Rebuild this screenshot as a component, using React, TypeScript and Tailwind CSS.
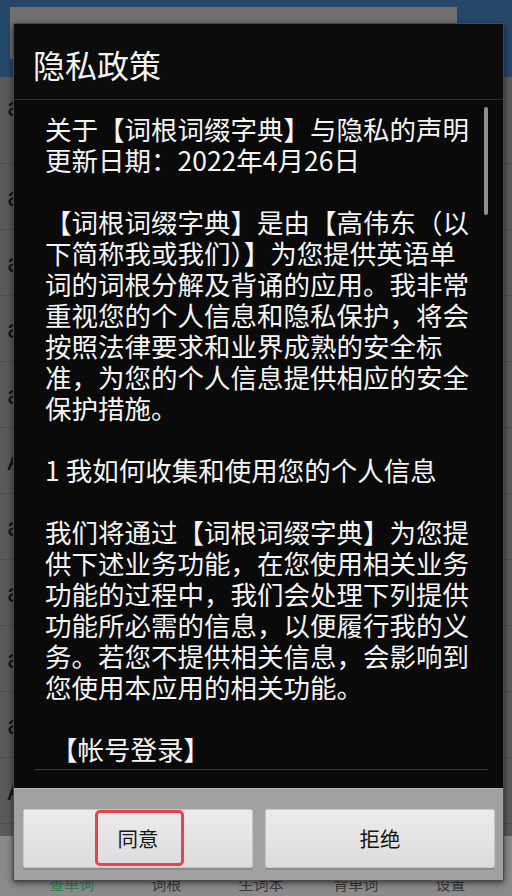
import React from "react";

const lines: string[] = [
  "关于【词根词缀字典】与隐私的声明",
  "更新日期：2022年4月26日",
  "",
  "【词根词缀字典】是由【高伟东（以",
  "下简称我或我们）】为您提供英语单",
  "词的词根分解及背诵的应用。我非常",
  "重视您的个人信息和隐私保护，将会",
  "按照法律要求和业界成熟的安全标",
  "准，为您的个人信息提供相应的安全",
  "保护措施。",
  "",
  "1 我如何收集和使用您的个人信息",
  "",
  "我们将通过【词根词缀字典】为您提",
  "供下述业务功能，在您使用相关业务",
  "功能的过程中，我们会处理下列提供",
  "功能所必需的信息，以便履行我的义",
  "务。若您不提供相关信息，会影响到",
  "您使用本应用的相关功能。",
  "",
  " 【帐号登录】",
];

const words = ["a", "a cappella", "a fortiori", "a posteriori", "a priori", "A.D.", "aah", "aardvark", "aardwolf", "aargh", "Aaron"];
const tabs = ["查单词", "词根", "生词本", "背单词", "设置"];

export default function App() {
  return (
    <div
      className="relative w-[512px] h-[896px] overflow-hidden bg-[#5a5a5a]"
      style={{ fontFamily: '"Noto Sans CJK SC", "Noto Sans", Roboto, sans-serif' }}
    >
      {/* background page (dimmed) */}
      <div className="flex flex-col h-full">
        <div className="h-[77px] shrink-0 bg-[#25476a] pt-[7px] pl-[10px] pr-[55px]">
          <div className="h-[52px] bg-[#6f6f6f]" />
        </div>
        <div className="flex-1 flex flex-col overflow-hidden">
          {words.map((w, i) => (
            <div
              key={w}
              className={`${i === 0 ? "h-[87px] pt-[14px]" : "h-[66px] items-center"} shrink-0 flex border-b border-[#4f4f4f] pl-[7px]`}
            >
              <span className="text-[26px] leading-[32px] text-[#111]" style={{ fontFamily: "Roboto, sans-serif" }}>{w}</span>
            </div>
          ))}
        </div>
        <div className="h-[60px] shrink-0 bg-[#8a8a8a] grid grid-cols-5 pl-[24px] pr-[14px] overflow-hidden">
          {tabs.map((t, i) => (
            <div key={t} className="flex justify-center pt-[38px]">
              <span className={`text-[15px] leading-[20px] ${i === 0 ? "text-[#2f7f52]" : "text-[#3a3a3a]"}`}>{t}</span>
            </div>
          ))}
        </div>
      </div>

      {/* privacy dialog */}
      <div className="absolute left-[13px] top-[23px] w-[491px] h-[858px] flex flex-col border border-[#4a4a4a] rounded-[2px] shadow-[0_2px_6px_rgba(0,0,0,0.6)] overflow-hidden">
        <div className="h-[75px] shrink-0 bg-[#0c0c0c] flex items-center pl-[19px] pt-[5px]">
          <span className="text-[32px] leading-[32px] text-[#f2f2f2]">隐私政策</span>
        </div>
        <div className="h-px shrink-0 bg-[#2c2c2c]" />
        <div className="relative flex-1 flex flex-col bg-[#0a0a0a]">
          <div className="flex-1 overflow-hidden pl-[31px] pt-[13px] text-[26.5px] leading-[31px] text-[#f4f4f4]">
            {lines.map((l, i) => (
              <div key={i} className="h-[31px] whitespace-pre">
                {l}
              </div>
            ))}
          </div>
          <div className="absolute left-[470px] top-[7px] w-[4px] h-[108px] rounded-[2px] bg-[#8e8e8e]" />
          <div className="h-px shrink-0 ml-[21px] mr-[15px] bg-[#3a3a3a]" />
          <div className="h-[18px] shrink-0" />
        </div>
        <div className="h-[92px] shrink-0 bg-[#a1a1a1] border-t border-[#b3b3b3] flex gap-[12px] pl-[9px] pr-[8px] pt-[20px] pb-[12px]">
          <div className="relative flex-1 flex items-center justify-center rounded-[2px] bg-gradient-to-b from-[#ececec] to-[#dcdcdc] border border-[#c6c6c6] shadow-[0_2px_0_#8c8c8c]">
            <span className="text-[20.5px] text-[#151515]">同意</span>
            <div className="absolute left-[71px] top-[0px] w-[89px] h-[56px] rounded-[5px] border-[3px] border-[#e8434b]" />
          </div>
          <div className="flex-1 flex items-center justify-center rounded-[2px] bg-gradient-to-b from-[#ececec] to-[#dcdcdc] border border-[#c6c6c6] shadow-[0_2px_0_#8c8c8c]">
            <span className="text-[20.5px] text-[#151515]">拒绝</span>
          </div>
        </div>
      </div>
    </div>
  );
}
